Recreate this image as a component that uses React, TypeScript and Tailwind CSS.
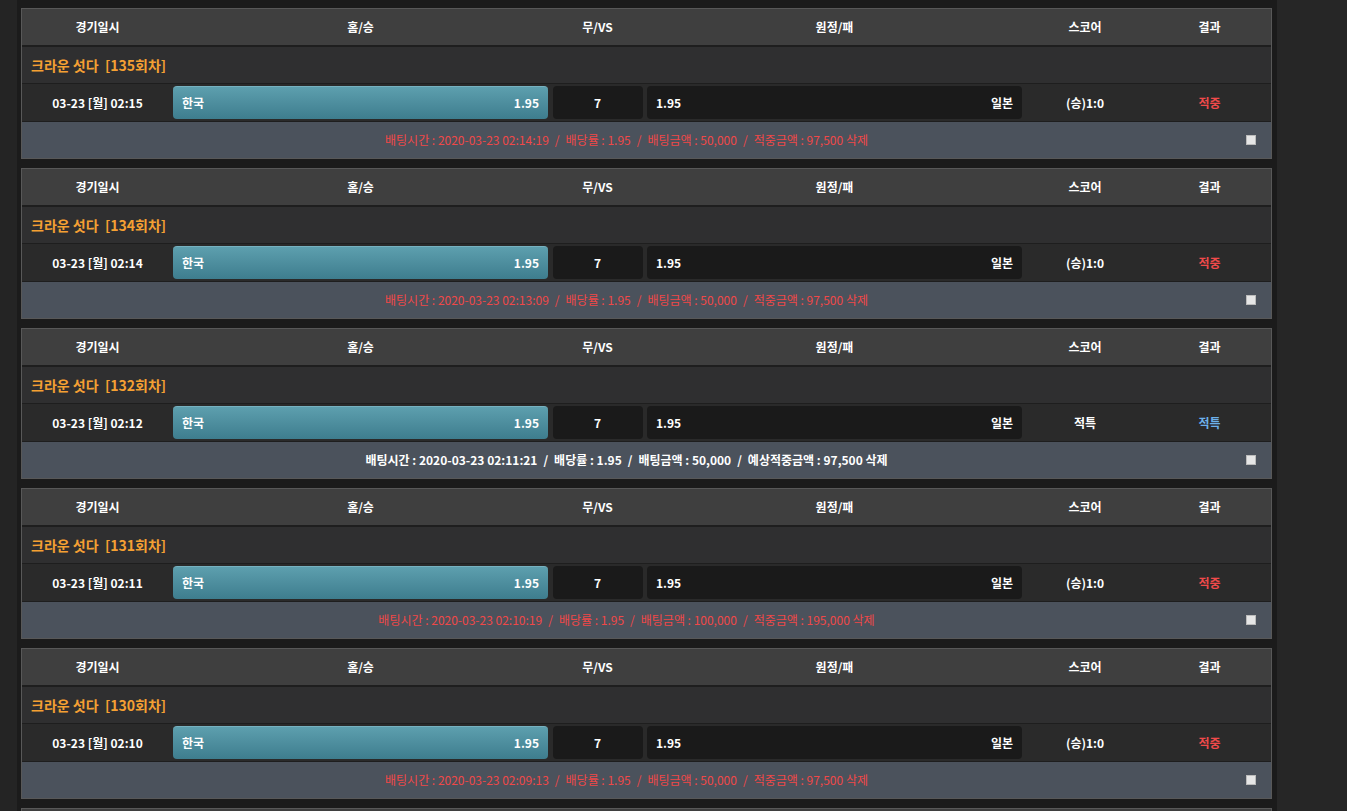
import React from 'react';

type Bet = {
    round: number;
    date: string;
    score: string;
    result: '적중' | '적특';
    betTime: string;
    amount: string;
    win: string;
    pending?: boolean;
}

const bets: Bet[] = [
    { round: 135, date: '03-23 [월] 02:15', score: '(승)1:0', result: '적중', betTime: '2020-03-23 02:14:19', amount: '50,000', win: '97,500' },
    { round: 134, date: '03-23 [월] 02:14', score: '(승)1:0', result: '적중', betTime: '2020-03-23 02:13:09', amount: '50,000', win: '97,500' },
    { round: 132, date: '03-23 [월] 02:12', score: '적특', result: '적특', betTime: '2020-03-23 02:11:21', amount: '50,000', win: '97,500', pending: true },
    { round: 131, date: '03-23 [월] 02:11', score: '(승)1:0', result: '적중', betTime: '2020-03-23 02:10:19', amount: '100,000', win: '195,000' },
    { round: 130, date: '03-23 [월] 02:10', score: '(승)1:0', result: '적중', betTime: '2020-03-23 02:09:13', amount: '50,000', win: '97,500' },
    { round: 129, date: '03-23 [월] 02:09', score: '(승)1:0', result: '적중', betTime: '2020-03-23 02:08:11', amount: '50,000', win: '97,500' },
];

const Sep = () => <span className="mx-[6px]">/</span>;

const BetCard = ({ bet }: { bet: Bet }) => (
    <div className="border border-[#585858] mb-[9px]">
        {/* header */}
        <div className="h-[38px] bg-[#3f3f3f] flex items-center text-white font-bold text-[12px] border-b-2 border-[#1e1e1e]">
            <div className="w-[151px] text-center">경기일시</div>
            <div className="w-[375px] text-center">홈/승</div>
            <div className="w-[99px] text-center">무/VS</div>
            <div className="w-[375px] text-center">원정/패</div>
            <div className="w-[126px] text-center">스코어</div>
            <div className="flex-1 text-center">결과</div>
        </div>

        {/* title */}
        <div className="h-[37px] bg-[#2f2f30] flex items-center pl-[9px] text-[#f5a033] font-bold text-[14px] border-b border-[#1e1e1e]">
            크라운 섯다&nbsp;&nbsp;[{bet.round}회차]
        </div>

        {/* match */}
        <div className="h-[38px] bg-[#2a2a2a] flex items-center text-white font-bold text-[12px] border-b border-[#1e1e1e]">
            <div className="w-[151px] text-center">{bet.date}</div>
            <div className="w-[375px] h-[33px] rounded-[4px] bg-gradient-to-b from-[#5d9fae] to-[#3e7d8e] border-t border-[#77b2c0] flex items-center justify-between px-[9px]">
                <span>한국</span>
                <span>1.95</span>
            </div>
            <div className="w-[99px] flex justify-center">
                <div className="w-[90px] h-[33px] rounded-[4px] bg-[#1a1a1a] flex items-center justify-center">7</div>
            </div>
            <div className="w-[375px] h-[33px] rounded-[4px] bg-[#1a1a1a] flex items-center justify-between px-[9px]">
                <span>1.95</span>
                <span>일본</span>
            </div>
            <div className="w-[126px] text-center">{bet.score}</div>
            <div className={`flex-1 text-center ${bet.result === '적특' ? 'text-[#6cb0ea]' : 'text-[#f04a4a]'}`}>{bet.result}</div>
        </div>

        {/* bet info */}
        <div className="h-[36px] bg-[#4b525c] flex items-center text-[12px]">
            <div className={`flex-1 text-center ${bet.pending ? 'text-white font-bold' : 'text-[#f04848]'}`}>
                배팅시간 : {bet.betTime}<Sep />배당률 : 1.95<Sep />배팅금액 : {bet.amount}<Sep />{bet.pending ? '예상적중금액' : '적중금액'} : {bet.win} 삭제
            </div>
            <div className="w-[40px] flex justify-center">
                <span className="block w-[10px] h-[10px] bg-[#e6e6e6] border border-[#bbb]" />
            </div>
        </div>
    </div>
);

export default function App() {
    return (
        <div className="h-[811px] overflow-hidden bg-[#262626] flex" style={{ fontFamily: '"Noto Sans CJK KR", "Noto Sans", sans-serif' }}>
            <div className="w-[17px] bg-[#242424]" />
            <div className="w-[1260px] bg-[#1b1b1b] pt-[8px] pl-[4px] pr-[5px]">
                {bets.map((b) => <BetCard key={b.round} bet={b} />)}
            </div>
        </div>
    );
}
